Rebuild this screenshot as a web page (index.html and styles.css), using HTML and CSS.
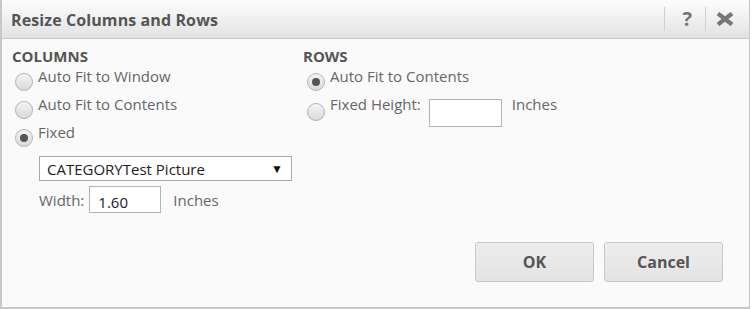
FILE: index.html
```html
<!DOCTYPE html>
<html lang="en">
<head>
	<meta charset="utf-8">
	<title>Resize Columns and Rows</title>
	<link rel="stylesheet" href="styles.css">
</head>
<body>
<div class="dialog">
	<div class="titlebar">
		<span class="title">Resize Columns and Rows</span>
		<span class="tools">
			<span class="sep"></span>
			<span class="tool">?</span>
			<span class="sep"></span>
			<svg class="close" width="18" height="14" viewBox="0 0 18 14">
				<path d="M2 1.5 L16 12.5 M16 1.5 L2 12.5" stroke="#777" stroke-width="4.2" fill="none"/>
			</svg>
		</span>
	</div>
	<div class="body">
		<div class="col cols">
			<b class="head">COLUMNS</b>
			<div class="opt"><span class="radio"></span>Auto Fit to Window</div>
			<div class="opt"><span class="radio"></span>Auto Fit to Contents</div>
			<div class="opt"><span class="radio on"></span>Fixed</div>
			<div class="select">
				<span>CATEGORYTest Picture</span>
				<span class="arrow">&#9660;</span>
			</div>
			<div class="field">
				<span class="lbl">Width:</span>
				<span class="input">1.60</span>
				<span class="unit">Inches</span>
			</div>
		</div>
		<div class="col rows">
			<b class="head">ROWS</b>
			<div class="opt"><span class="radio on"></span>Auto Fit to Contents</div>
			<div class="opt fixed"><span class="radio"></span>Fixed Height:<span class="input"></span><span class="unit">Inches</span></div>
		</div>
	</div>
	<div class="buttons">
		<span class="btn">OK</span>
		<span class="btn">Cancel</span>
	</div>
</div>
</body>
</html>
```

FILE: styles.css
```css
body{
	margin: 0;
	background: #fff;
	font-family: "Open Sans", "Liberation Sans", sans-serif;
	font-size: 15px;
	color: #666;
}
.dialog{
	width: 747px;
	height: 307px;
	border-left: 2px solid #c8c8c8;
	border-right: 1px solid #c8c8c8;
	border-bottom: 2px solid #c8c8c8;
	background: #fafafa;
	display: flex;
	flex-direction: column;
}
.titlebar{
	height: 38px;
	border-bottom: 1px solid #c8c8c8;
	background: linear-gradient(#fdfdfd, #e2e2e2);
	display: flex;
	align-items: center;
	justify-content: space-between;
	padding: 0 15px 0 9px;
}
.title{
	font-weight: bold;
	font-size: 16px;
	color: #555;
	margin-top: 1px;
	letter-spacing: 0.1px;
}
.tools{
	display: flex;
	align-items: center;
}
.sep{
	width: 1px;
	height: 24px;
	background: #d0d0d0;
}
.tool{
	font-weight: bold;
	font-size: 20px;
	color: #777;
	padding: 0 13px 0 17px;
	line-height: 24px;
}
.close{
	margin-left: 10px;
}
.body{
	display: flex;
	padding: 9px 0 0 8px;
	flex: 1;
}
.col{
	display: flex;
	flex-direction: column;
}
.cols{
	width: 292px;
}
.head{
	color: #555;
	font-size: 15px;
	line-height: 16px;
	padding-left: 2px;
	margin-bottom: 2px;
}
.rows .head{
	padding-left: 1px;
}
.opt{
	display: flex;
	align-items: flex-start;
	height: 28px;
	line-height: 20px;
}
.radio{
	width: 16px;
	height: 16px;
	border: 1px solid #b4b4b4;
	border-radius: 50%;
	background: linear-gradient(#f4f4f4, #dadada);
	margin: 7px 5px 0 5px;
	display: flex;
	align-items: center;
	justify-content: center;
	flex: none;
}
.radio.on::after{
	content: "";
	width: 8px;
	height: 8px;
	border-radius: 50%;
	background: #555;
}
.select{
	margin: 6px 0 0 29px;
	width: 244px;
	height: 23px;
	border: 1px solid #aaa;
	background: #fff;
	color: #222;
	display: flex;
	align-items: center;
	justify-content: space-between;
	padding: 0 0 0 7px;
}
.arrow{
	font-size: 12px;
	color: #111;
	padding-right: 8px;
}
.field{
	display: flex;
	align-items: center;
	margin: 5px 0 0 29px;
}
.input{
	width: 72px;
	height: 27px;
	border: 1px solid #b4b4b4;
	background: #fff;
	color: #222;
	padding: 5px 0 0 8px;
	box-sizing: border-box;
	line-height: 20px;
	margin: 0 12px 0 5px;
}
.fixed .input{
	width: 73px;
	height: 28px;
	margin: 5px 10px 0 8px;
}
.fixed .radio{
	margin-top: 9px;
}
.buttons{
	display: flex;
	justify-content: flex-end;
	gap: 10px;
	padding: 0 26px 25px 0;
}
.btn{
	width: 117px;
	height: 38px;
	border: 1px solid #c8c8c8;
	border-radius: 3px;
	background: linear-gradient(#ededed, #e3e3e3);
	font-weight: bold;
	font-size: 16px;
	color: #555;
	display: flex;
	align-items: center;
	justify-content: center;
}
```
